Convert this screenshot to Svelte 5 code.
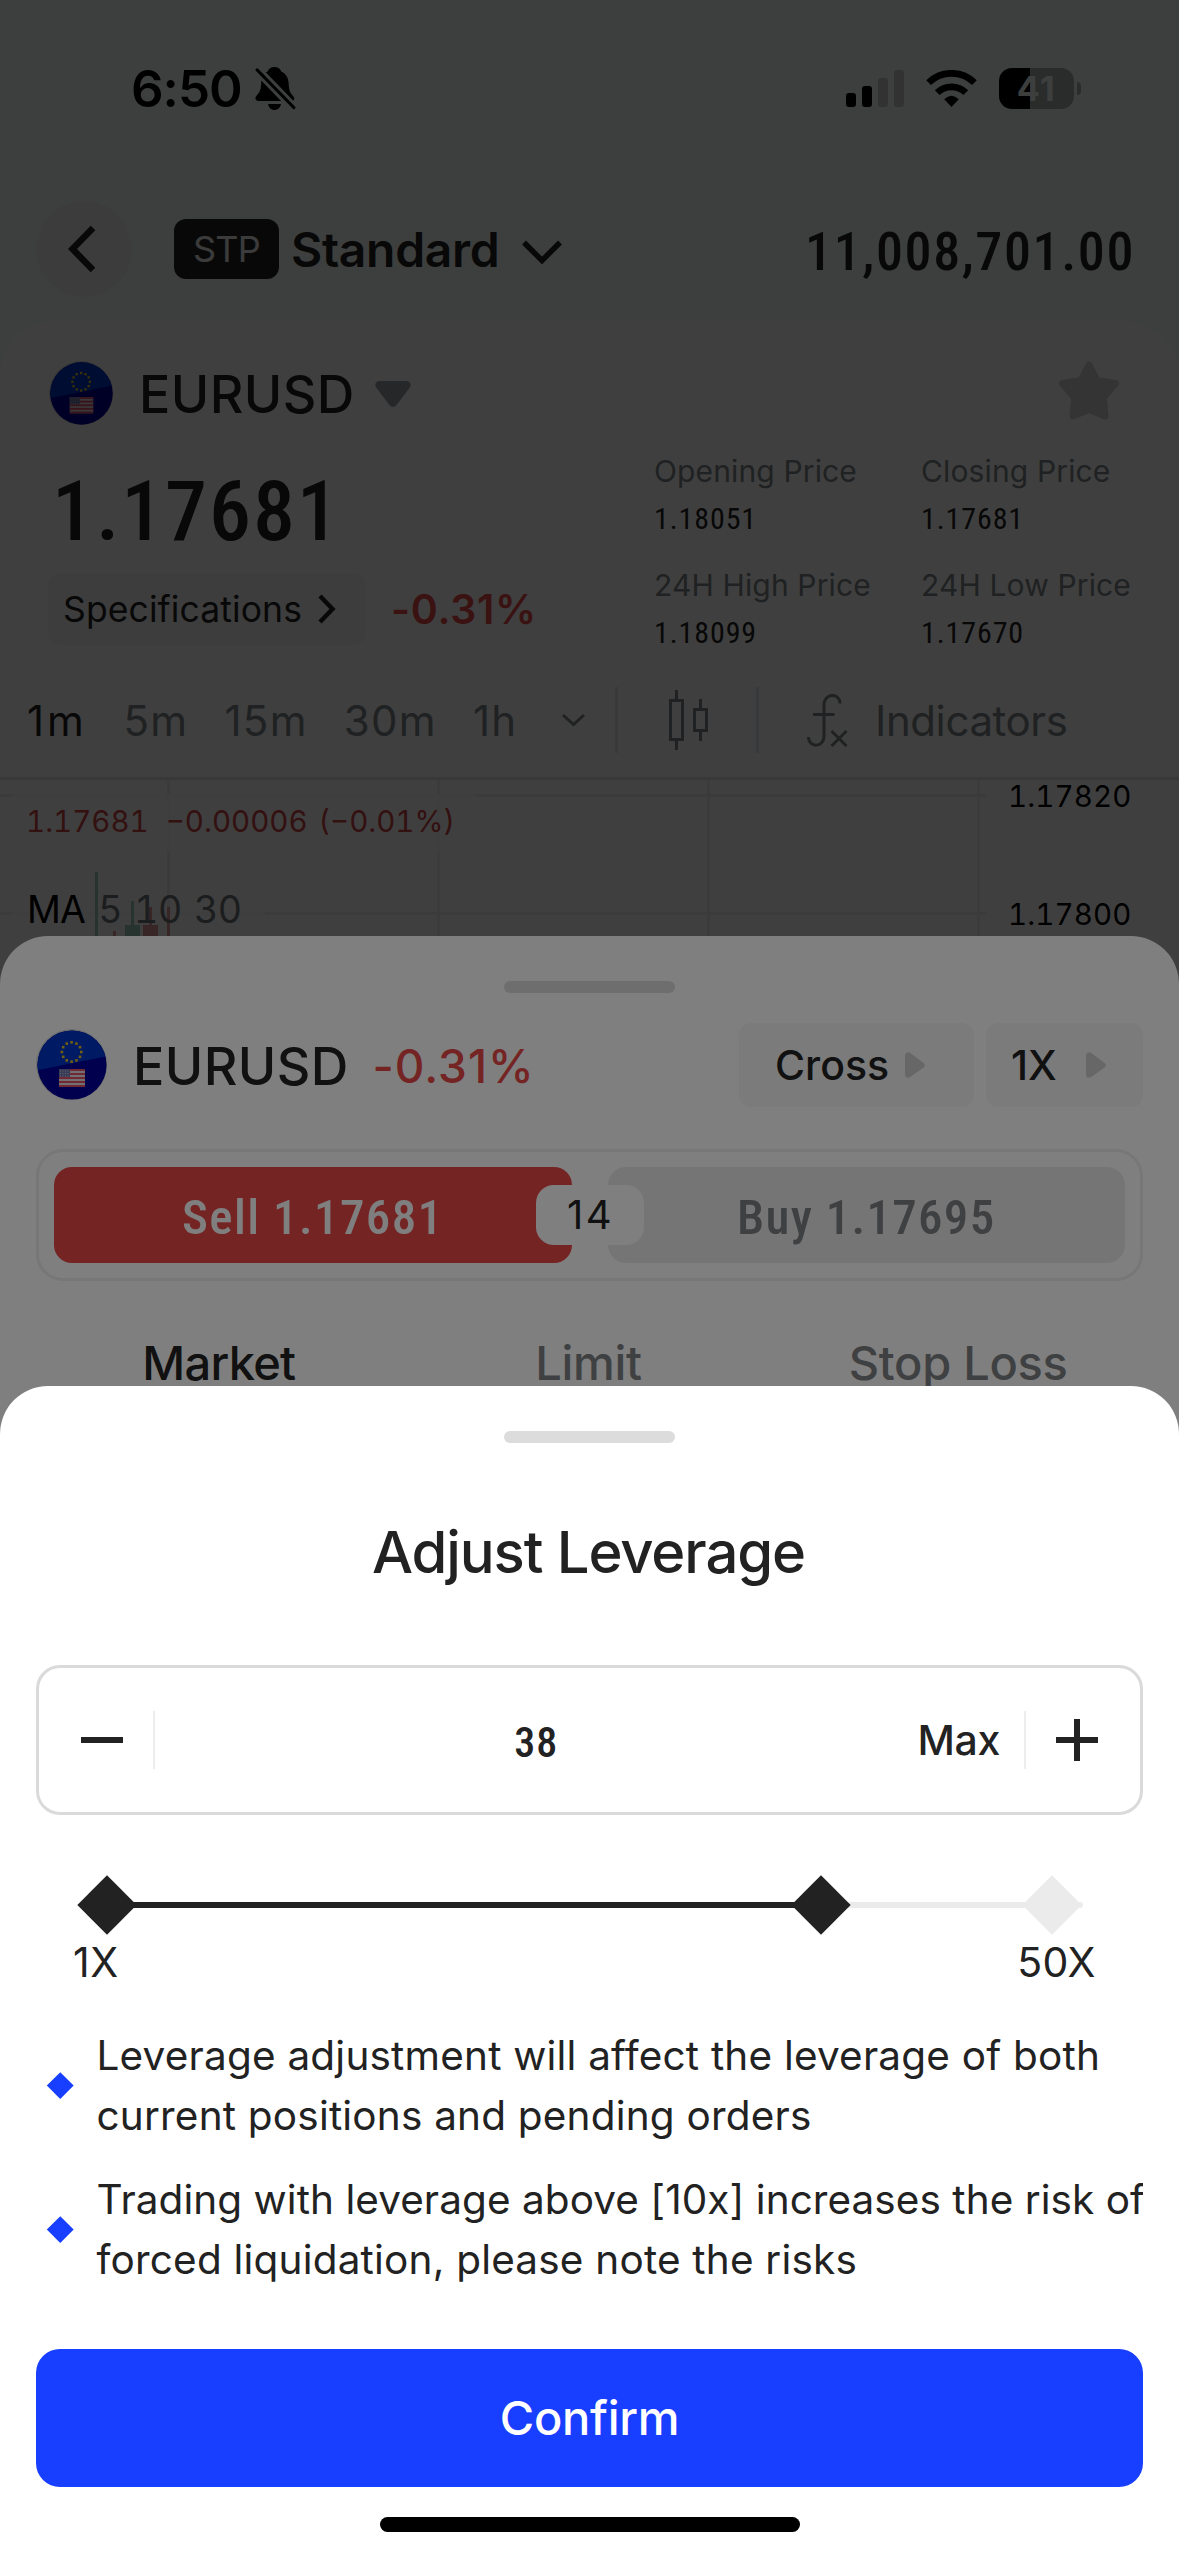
<script>
    let leverage = 38;
    const minLeverage = 1;
    const maxLeverage = 50;

    const stats = [
        { label: "Opening Price", value: "1.18051" },
        { label: "Closing Price", value: "1.17681" },
        { label: "24H High Price", value: "1.18099" },
        { label: "24H Low Price", value: "1.17670" },
    ];
    const intervals = ["1m", "5m", "15m", "30m", "1h"];
    const starAngles = Array.from({ length: 12 }, (_, i) => (i * Math.PI) / 6);
    const stripes = [0, 1, 2, 3, 4];

    $: progress =
        ((leverage - minLeverage) / (maxLeverage - minLeverage)) * 100;
</script>

{#snippet pairIcon(size)}
    <svg width={size} height={size} viewBox="0 0 72 72">
        <defs>
            <clipPath id="pair-{size}"><circle cx="36" cy="36" r="34.6" /></clipPath>
        </defs>
        <circle cx="35.6" cy="35.6" r="35.6" fill="#dedede" />
        <g clip-path="url(#pair-{size})">
            <rect width="72" height="72" fill="#00009c" />
            <path d="M0 41.5L72 27V0H0z" fill="#0034c8" />
            {#each starAngles as a}
                <rect
                    x={35.6 + 9.7 * Math.sin(a) - 1.3}
                    y={23 - 9.7 * Math.cos(a) - 1.3}
                    width="2.6"
                    height="2.6"
                    fill="#e0c020"
                />
            {/each}
            <rect x="23" y="40" width="26" height="18" fill="#e4dfe6" />
            {#each stripes as s}
                <rect x="23" y={40 + s * 4} width="26" height="2" fill="#e0506a" />
            {/each}
            <rect x="23" y="40" width="11" height="8" fill="#6c74a8" />
            <path d="M24 42h9M24 44.500h9M24 47h9" stroke="#d8d8ea" stroke-dasharray="1 1.500" />
        </g>
    </svg>
{/snippet}

<div class="phone">
    <div class="status">
        <span class="time">6:50</span>
        <svg class="bell" width="41" height="43" viewBox="0 0 41 43">
            <path d="M19.500 0c3.500 0 6 1.800 6.800 4.600 5 2.300 7.200 6.800 7.400 12.400.3 6.500 1.300 8.500 4 11.500 2.500 2.800 1.800 5.500-1.700 5.500H3.500C.4 34-.6 31.200 1.500 28.700 4.600 25.400 5.900 23 6.200 17 6.400 11.400 8 7 12.600 4.600 13.500 1.800 16 0 19.500 0zM13 37h13c-.7 3.700-3.200 6-6.500 6S13.700 40.700 13 37z" />
            <path d="M-2 -1.500L42 44" stroke="#f4fcf8" stroke-width="9" />
            <path d="M2.200 3L38.800 40.500" stroke="#000" stroke-width="3.200" stroke-linecap="round" />
        </svg>
        <svg class="signal" width="58" height="37">
            <rect y="23" width="10" height="14" rx="3" />
            <rect x="16" y="16" width="10" height="21" rx="3" />
            <rect x="32" y="8" width="10" height="29" rx="3" fill="#c4cac7" />
            <rect x="48" width="10" height="37" rx="3" fill="#c4cac7" />
        </svg>
        <svg class="wifi" width="51" height="37" viewBox="0 0 51 37">
            <path d="M2.600 12.600a33 33 0 0 1 45.800 0M11.200 22.600a20.500 20.500 0 0 1 28.600 0" fill="none" stroke="#000" stroke-width="6.800" />
            <path d="M25.500 37l-7.300-7.800q7.300-7 14.600 0z" />
        </svg>
        <div class="battery">41</div>
        <div class="battery-cap"></div>
    </div>

    <header>
        <button class="back" aria-label="Back">
            <svg width="28" height="46" viewBox="0 0 28 46">
                <path d="M25 2L4.500 23 25 44" fill="none" stroke="#222" stroke-width="6.500" />
            </svg>
        </button>
        <span class="badge">STP</span>
        <span class="account">Standard</span>
        <svg class="account-arrow" width="40" height="24" viewBox="0 0 40 24">
            <path d="M2 2.500l18 18 18-18" fill="none" stroke="#222" stroke-width="5.500" />
        </svg>
        <span class="balance">11,008,701.00</span>
    </header>

    <main>
        <div class="pair">
            {@render pairIcon(65)}
            <h1>EURUSD</h1>
            <svg width="36" height="26" viewBox="0 0 36 26">
                <path d="M4.500 0h27c4 0 5.500 4 3 7L22 23.500c-2 3.300-6 3.300-8 0L1.500 7C-1 4 .5 0 4.500 0z" fill="#9a9fa3" />
            </svg>
            <svg class="star" width="62" height="59" viewBox="0 0 62 59">
                <path d="M31 4l8 15.500 18.500 3L45.500 36.500l1.500 18.500L31 48.500 15 55l1.500-18.500L4.500 22.500l18.500-3z" fill="#d2d2d2" stroke="#d2d2d2" stroke-width="7" stroke-linejoin="round" />
            </svg>
        </div>

        <div class="quote">
            <div class="quote-main">
                <div class="price">1.17681</div>
                <div class="quote-row">
                    <div class="specs">
                        Specifications
                        <svg width="19" height="30" viewBox="0 0 19 30">
                            <path d="M3 2l12.500 13L3 28" fill="none" stroke="#222" stroke-width="4.500" />
                        </svg>
                    </div>
                    <span class="change">-0.31%</span>
                </div>
            </div>
            <dl class="stats">
                {#each stats as stat}
                    <div>
                        <dt>{stat.label}</dt>
                        <dd>{stat.value}</dd>
                    </div>
                {/each}
            </dl>
        </div>

        <div class="toolbar">
            <div class="intervals">
                {#each intervals as interval, i}
                    <span class:active={i === 0}>{interval}</span>
                {/each}
                <svg width="25" height="14" viewBox="0 0 25 14">
                    <path d="M2 2l10.500 9.500L23 2" fill="none" stroke="#7f8788" stroke-width="3" />
                </svg>
            </div>
            <div class="chart-type">
                <svg width="40" height="60" viewBox="0 0 40 60" fill="none" stroke="#7f8788" stroke-width="3">
                    <path d="M1.500 10.500h12v39h-12zM7.500 0v10.500M7.500 49.500V60M25.500 19.500h12v21h-12zM31.500 9v10.500M31.500 40.500V51" />
                </svg>
            </div>
            <div class="indicators">
                <svg width="41" height="53" viewBox="0 0 41 53" fill="none" stroke="#7f8788" stroke-width="3">
                    <path d="M1.500 43c0 11 15.500 11 15.500-1V11C17 -1.500 33 -1.500 33 9.500M6 20.500h21.500M24.500 37l15 15M39.500 37l-15 15" />
                </svg>
                Indicators
            </div>
        </div>

        <div class="chart">
            <svg class="plot" width="1179" height="176">
                <g fill="#eeeeee">
                    <rect x="167" width="3" height="176" />
                    <rect x="437" width="3" height="176" />
                    <rect x="707" width="3" height="176" />
                    <rect x="977" width="3" height="176" />
                    <rect y="14" width="987" height="3" />
                    <rect y="132" width="987" height="3" />
                </g>
                <rect x="12" y="14" width="464" height="58" fill="#fff" opacity="0.6" />
                <rect x="12" y="130" width="253" height="7" fill="#fff" opacity="0.7" />
                <g fill="#9ccfbe">
                    <rect x="95" y="92" width="3" height="84" />
                    <rect x="131" y="121" width="3" height="30" />
                    <rect x="125" y="145" width="15" height="31" />
                </g>
                <g fill="#e29494">
                    <rect x="113" y="151" width="3" height="25" />
                    <rect x="149" y="127" width="3" height="20" />
                    <rect x="143" y="145" width="15" height="31" />
                    <rect x="167" y="127" width="3" height="49" />
                </g>
            </svg>
            <div class="legend">
                <div class="last">
                    <span>1.17681</span>
                    <span>−0.00006</span>
                    <span>(−0.01%)</span>
                </div>
                <div class="ma">
                    <b>MA</b>
                    <span>5</span>
                    <span>10</span>
                    <span>30</span>
                </div>
            </div>
            <div class="axis">
                <span>1.17820</span>
                <span>1.17800</span>
            </div>
        </div>
    </main>

    <div class="scrim"></div>

    <section class="sheet order">
        <div class="handle"></div>
        <div class="order-head">
            {@render pairIcon(72)}
            <h2>EURUSD</h2>
            <span class="order-change">-0.31%</span>
            <button class="option cross">
                Cross
                <svg width="20" height="26" viewBox="0 0 20 26">
                    <path d="M0 4c0-4 3-5 6-2.500l12 9c2.500 2 2.500 3.500 0 5.500l-12 8.500C3 27 0 26 0 22z" fill="#cfcfcf" />
                </svg>
            </button>
            <button class="option times">
                1X
                <svg width="20" height="26" viewBox="0 0 20 26">
                    <path d="M0 4c0-4 3-5 6-2.500l12 9c2.500 2 2.500 3.500 0 5.500l-12 8.500C3 27 0 26 0 22z" fill="#cfcfcf" />
                </svg>
            </button>
        </div>
        <div class="sides">
            <button class="sell">Sell 1.17681</button>
            <button class="buy">Buy 1.17695</button>
            <span class="spread">14</span>
        </div>
        <nav>
            <span class="current">Market</span>
            <span>Limit</span>
            <span>Stop Loss</span>
        </nav>
    </section>

    <div class="scrim"></div>

    <section class="sheet leverage">
        <div class="handle"></div>
        <h2>Adjust Leverage</h2>
        <div class="stepper">
            <button aria-label="Decrease" on:click={() => (leverage = Math.max(minLeverage, leverage - 1))}>
                <svg width="42" height="42"><path d="M0 21h42" stroke="#222" stroke-width="6" /></svg>
            </button>
            <i></i>
            <span class="value">{leverage}</span>
            <button class="max" on:click={() => (leverage = maxLeverage)}>Max</button>
            <i></i>
            <button aria-label="Increase" on:click={() => (leverage = Math.min(maxLeverage, leverage + 1))}>
                <svg width="42" height="42"><path d="M0 21h42M21 0v42" stroke="#222" stroke-width="6" /></svg>
            </button>
        </div>
        <div class="slider">
            <div class="rail"></div>
            <div class="fill" style="width: {progress}%"></div>
            <div class="knob" style="left: 0%"></div>
            <div class="knob" style="left: {progress}%"></div>
            <div class="knob end" style="left: 100%"></div>
        </div>
        <div class="range">
            <span>{minLeverage}X</span>
            <span>{maxLeverage}X</span>
        </div>
        <ul>
            <li>
                <span class="dot"></span>
                <p>Leverage adjustment will affect the leverage of both<br />current positions and pending orders</p>
            </li>
            <li>
                <span class="dot"></span>
                <p>Trading with leverage above [10x] increases the risk of<br />forced liquidation, please note the risks</p>
            </li>
        </ul>
        <button class="confirm">Confirm</button>
        <div class="home"></div>
    </section>
</div>

<style>
    .phone {
        position: relative;
        width: 1179px;
        height: 2556px;
        overflow: hidden;
        background: #f4fcf8;
        color: #222;
        font-family: Inter, "Liberation Sans", sans-serif;
        white-space: nowrap;
    }

    svg {
        display: block;
        flex: none;
    }

    h1,
    h2,
    dl,
    dd,
    ul,
    p {
        margin: 0;
        padding: 0;
    }

    button {
        border: none;
        padding: 0;
        background: none;
        color: inherit;
        font: inherit;
    }

    .status {
        display: flex;
        align-items: center;
        height: 176px;
        padding: 0 98px 0 131px;
        color: #000;
    }

    .time {
        font-size: 51px;
        font-weight: 600;
        letter-spacing: -1px;
        width: 124px;
    }

    .signal {
        margin-left: auto;
    }

    .wifi {
        margin: 0 22px;
    }

    .battery {
        width: 75px;
        height: 41px;
        border-radius: 13px;
        background: linear-gradient(90deg, #000 31px, #aaafac 31px);
        color: #f4fcf8;
        font-size: 34px;
        font-weight: 700;
        line-height: 41px;
        letter-spacing: 1.5px;
        text-align: center;
    }

    .battery-cap {
        width: 4px;
        height: 13px;
        margin-left: 3px;
        border-radius: 0 6px 6px 0;
        background: #aaafac;
    }

    header {
        display: flex;
        align-items: center;
        height: 145px;
        padding: 0 44px 0 36px;
    }

    .back {
        display: flex;
        align-items: center;
        justify-content: center;
        width: 96px;
        height: 96px;
        padding-right: 5px;
        border-radius: 50%;
        background: #f2f2f2;
    }

    .badge {
        width: 105px;
        height: 60px;
        margin-left: 42px;
        border-radius: 12px;
        background: #222;
        color: #e8eeea;
        font-size: 36px;
        line-height: 61px;
        letter-spacing: -0.7px;
        text-align: center;
    }

    .account {
        margin-left: 12px;
        padding-top: 2px;
        font-size: 48px;
        font-weight: 600;
        letter-spacing: -0.3px;
    }

    .account-arrow {
        margin: 6px 0 0 23px;
    }

    .balance {
        margin-left: auto;
        padding-top: 6px;
        font: 500 54px "Roboto Condensed", Roboto, sans-serif;
        letter-spacing: 1.6px;
    }

    main {
        height: 700px;
        padding-top: 20px;
        border-radius: 56px 56px 0 0;
        background: #fff;
    }

    .pair {
        display: flex;
        align-items: center;
        height: 105px;
        padding: 0 59px 0 49px;
    }

    .pair h1 {
        margin: 0 20px 0 25px;
        padding-top: 1px;
        font-size: 52px;
        font-weight: 500;
        letter-spacing: 0.4px;
    }

    .star {
        margin: -6px 0 0 auto;
    }

    .quote {
        display: flex;
        height: 210px;
        padding-left: 48px;
    }

    .quote-main {
        width: 605px;
    }

    .price {
        height: 122px;
        padding: 5px 0 0 4px;
        font: 500 84px/122px "Roboto Condensed", Roboto, sans-serif;
        letter-spacing: 1.9px;
    }

    .quote-row {
        display: flex;
        align-items: center;
    }

    .specs {
        box-sizing: border-box;
        display: flex;
        align-items: center;
        gap: 15px;
        width: 318px;
        height: 72px;
        padding-left: 15px;
        border-radius: 12px;
        background: #f7f7f7;
        font-size: 35.5px;
        letter-spacing: 0.1px;
    }

    .change {
        margin-left: 25px;
        color: #ea4848;
        font-size: 41px;
        font-weight: 600;
        letter-spacing: 0.7px;
    }

    .stats {
        display: grid;
        grid-template-columns: 267px 220px;
        grid-auto-rows: 94px;
        row-gap: 20px;
        padding-top: 2px;
    }

    dt {
        padding-left: 1px;
        color: #7f8788;
        font-size: 30px;
        line-height: 47px;
        letter-spacing: 0.14px;
    }

    dd {
        padding-left: 1px;
        font: 400 30px/47px "Roboto Condensed", Roboto, sans-serif;
        letter-spacing: 0.9px;
    }

    .toolbar {
        display: flex;
        align-items: center;
        height: 114px;
        padding-top: 7px;
        border-bottom: 3px solid #e0e0e0;
        color: #7f8788;
        font-size: 42px;
    }

    .intervals {
        box-sizing: border-box;
        display: flex;
        align-items: center;
        gap: 36px;
        width: 615px;
        padding: 0 29px 0 27px;
        letter-spacing: 1.3px;
    }

    .intervals .active {
        margin-right: 1px;
        color: #222;
        letter-spacing: 2.8px;
    }

    .intervals svg {
        margin: -1px 0 0 auto;
    }

    .chart-type {
        box-sizing: border-box;
        display: flex;
        align-items: center;
        justify-content: center;
        width: 144px;
        height: 66px;
        padding-left: 3px;
        border: solid #e2e5e8;
        border-width: 0 3px;
    }

    .indicators {
        display: flex;
        align-items: center;
        gap: 27px;
        padding-left: 48px;
        letter-spacing: -0.4px;
    }

    .chart {
        position: relative;
        display: flex;
        justify-content: space-between;
        height: 176px;
        font-feature-settings: "tnum";
    }

    .plot {
        position: absolute;
        inset: 0;
    }

    .legend,
    .axis {
        position: relative;
    }

    .last {
        display: flex;
        gap: 17px;
        padding: 20px 0 0 26px;
        color: #cc4444;
        font-size: 29.5px;
        line-height: 42px;
    }

    .last span:last-child {
        margin-left: -6px;
    }

    .ma {
        display: flex;
        gap: 12px;
        padding: 40px 0 0 27px;
        color: #70777a;
        font-size: 37.5px;
        line-height: 56px;
        letter-spacing: -0.4px;
    }

    .ma b {
        margin-right: 1px;
        color: #000;
        font-weight: 400;
        letter-spacing: -0.8px;
    }

    .axis {
        display: flex;
        flex-direction: column;
        gap: 78px;
        width: 171px;
        color: #000;
        font-size: 29.5px;
        line-height: 40px;
        letter-spacing: 0.1px;
        margin-top: -4px;
    }

    .scrim {
        position: absolute;
        inset: 0;
        background: rgba(0, 0, 0, 0.503);
    }

    .sheet {
        position: absolute;
        right: 0;
        bottom: 0;
        left: 0;
        padding: 45px 36px 0;
        border-radius: 48px 48px 0 0;
        background: #fff;
    }

    .order {
        top: 936px;
    }

    .sheet.leverage {
        top: 1386px;
    }

    .handle {
        width: 171px;
        height: 12px;
        margin: 0 auto;
        border-radius: 6px;
        background: #dcdcdc;
    }

    .order-head {
        display: flex;
        align-items: center;
        height: 84px;
        margin-top: 30px;
    }

    .order-head h2 {
        margin-left: 25px;
        padding-top: 2px;
        font-size: 52px;
        font-weight: 500;
        letter-spacing: 0.4px;
    }

    .order-change {
        margin-left: 24px;
        padding-top: 2px;
        color: #ea4848;
        font-size: 46px;
        font-weight: 500;
        letter-spacing: 1px;
    }

    .option {
        box-sizing: border-box;
        display: flex;
        align-items: center;
        height: 84px;
        border-radius: 12px;
        background: #f6f6f6;
        font-size: 41px;
        font-weight: 500;
    }

    .cross {
        gap: 16px;
        width: 235px;
        margin-left: auto;
        padding-left: 36px;
    }

    .times {
        gap: 29px;
        width: 157px;
        margin-left: 12px;
        padding-left: 25px;
    }

    .sides {
        position: relative;
        display: flex;
        justify-content: space-between;
        height: 96px;
        margin-top: 42px;
        padding: 15px;
        border: 3px solid #eee;
        border-radius: 27px;
    }

    .sides button {
        width: 517.5px;
        padding-top: 4px;
        border-radius: 18px;
        font: 500 49px "Roboto Condensed", Roboto, sans-serif;
    }

    .sell {
        background: #ea4848;
        color: #fff;
        letter-spacing: 1.4px;
    }

    .buy {
        background: #ebebeb;
        color: #7f8184;
        letter-spacing: 1.3px;
    }

    .spread {
        position: absolute;
        top: 33px;
        left: 50%;
        width: 108px;
        border-radius: 18px;
        background: #fff;
        font-size: 40px;
        letter-spacing: 2.5px;
        line-height: 60px;
        text-align: center;
        text-indent: 2px;
        transform: translateX(-50%);
    }

    nav {
        display: grid;
        grid-template-columns: repeat(3, 1fr);
        margin: 52px 0 0 -2px;
        color: #7f8184;
        font-size: 47px;
        font-weight: 500;
        letter-spacing: -0.3px;
        line-height: 60px;
        text-align: center;
    }

    nav .current {
        color: #222;
        letter-spacing: -0.7px;
    }

    .leverage h2 {
        margin-bottom: 4px;
        font-size: 58px;
        font-weight: 500;
        letter-spacing: -1.11px;
        line-height: 218px;
        text-align: center;
        text-indent: -2px;
    }

    .stepper {
        display: flex;
        align-items: center;
        height: 144px;
        padding: 0 42px;
        border: 3px solid #dadada;
        border-radius: 24px;
        font-size: 41px;
        font-weight: 500;
    }

    .stepper i {
        width: 2px;
        height: 58px;
        margin: 0 30px;
        background: #ededed;
    }

    .stepper .value {
        flex: 1;
        padding: 4px 30px 0 0;
        font-family: "Roboto Condensed", Roboto, sans-serif;
        font-size: 42px;
        letter-spacing: 1px;
        text-align: center;
    }

    .max {
        margin-right: -6px;
        letter-spacing: -0.35px;
    }

    .slider {
        position: relative;
        height: 60px;
        margin: 60px 91px 0 71px;
    }

    .rail,
    .fill {
        position: absolute;
        top: 27px;
        left: 0;
        height: 6px;
    }

    .rail {
        right: -31px;
        border-radius: 3px;
        background: #ebebeb;
    }

    .fill {
        background: #222;
    }

    .knob {
        position: absolute;
        top: 9px;
        width: 42px;
        height: 42px;
        margin-left: -21px;
        background: #222;
        transform: rotate(45deg);
    }

    .knob.end {
        background: #ebebeb;
    }

    .range {
        display: flex;
        justify-content: space-between;
        padding: 0 47px 0 37px;
        font-size: 41px;
        letter-spacing: 0.5px;
        line-height: 54px;
    }

    ul {
        display: grid;
        gap: 24px;
        margin-top: 37px;
        list-style: none;
    }

    li {
        display: flex;
        align-items: center;
        overflow: hidden;
        padding-left: 15px;
        font-size: 40.5px;
        letter-spacing: 0.2px;
        line-height: 60px;
    }

    li:last-child p::first-line {
        letter-spacing: 0.06px;
    }

    .dot {
        flex: none;
        width: 18.5px;
        height: 18.5px;
        margin: -2px 27px 0 0;
        background: #183eff;
        transform: rotate(45deg);
    }

    .confirm {
        display: block;
        width: 100%;
        height: 138px;
        margin-top: 59px;
        padding-bottom: 2px;
        border-radius: 24px;
        background: #183eff;
        color: #fff;
        font-size: 47px;
        font-weight: 500;
        letter-spacing: -0.3px;
    }

    .home {
        width: 420px;
        height: 15px;
        margin: 30px auto 0;
        border-radius: 8px;
        background: #000;
    }
</style>
